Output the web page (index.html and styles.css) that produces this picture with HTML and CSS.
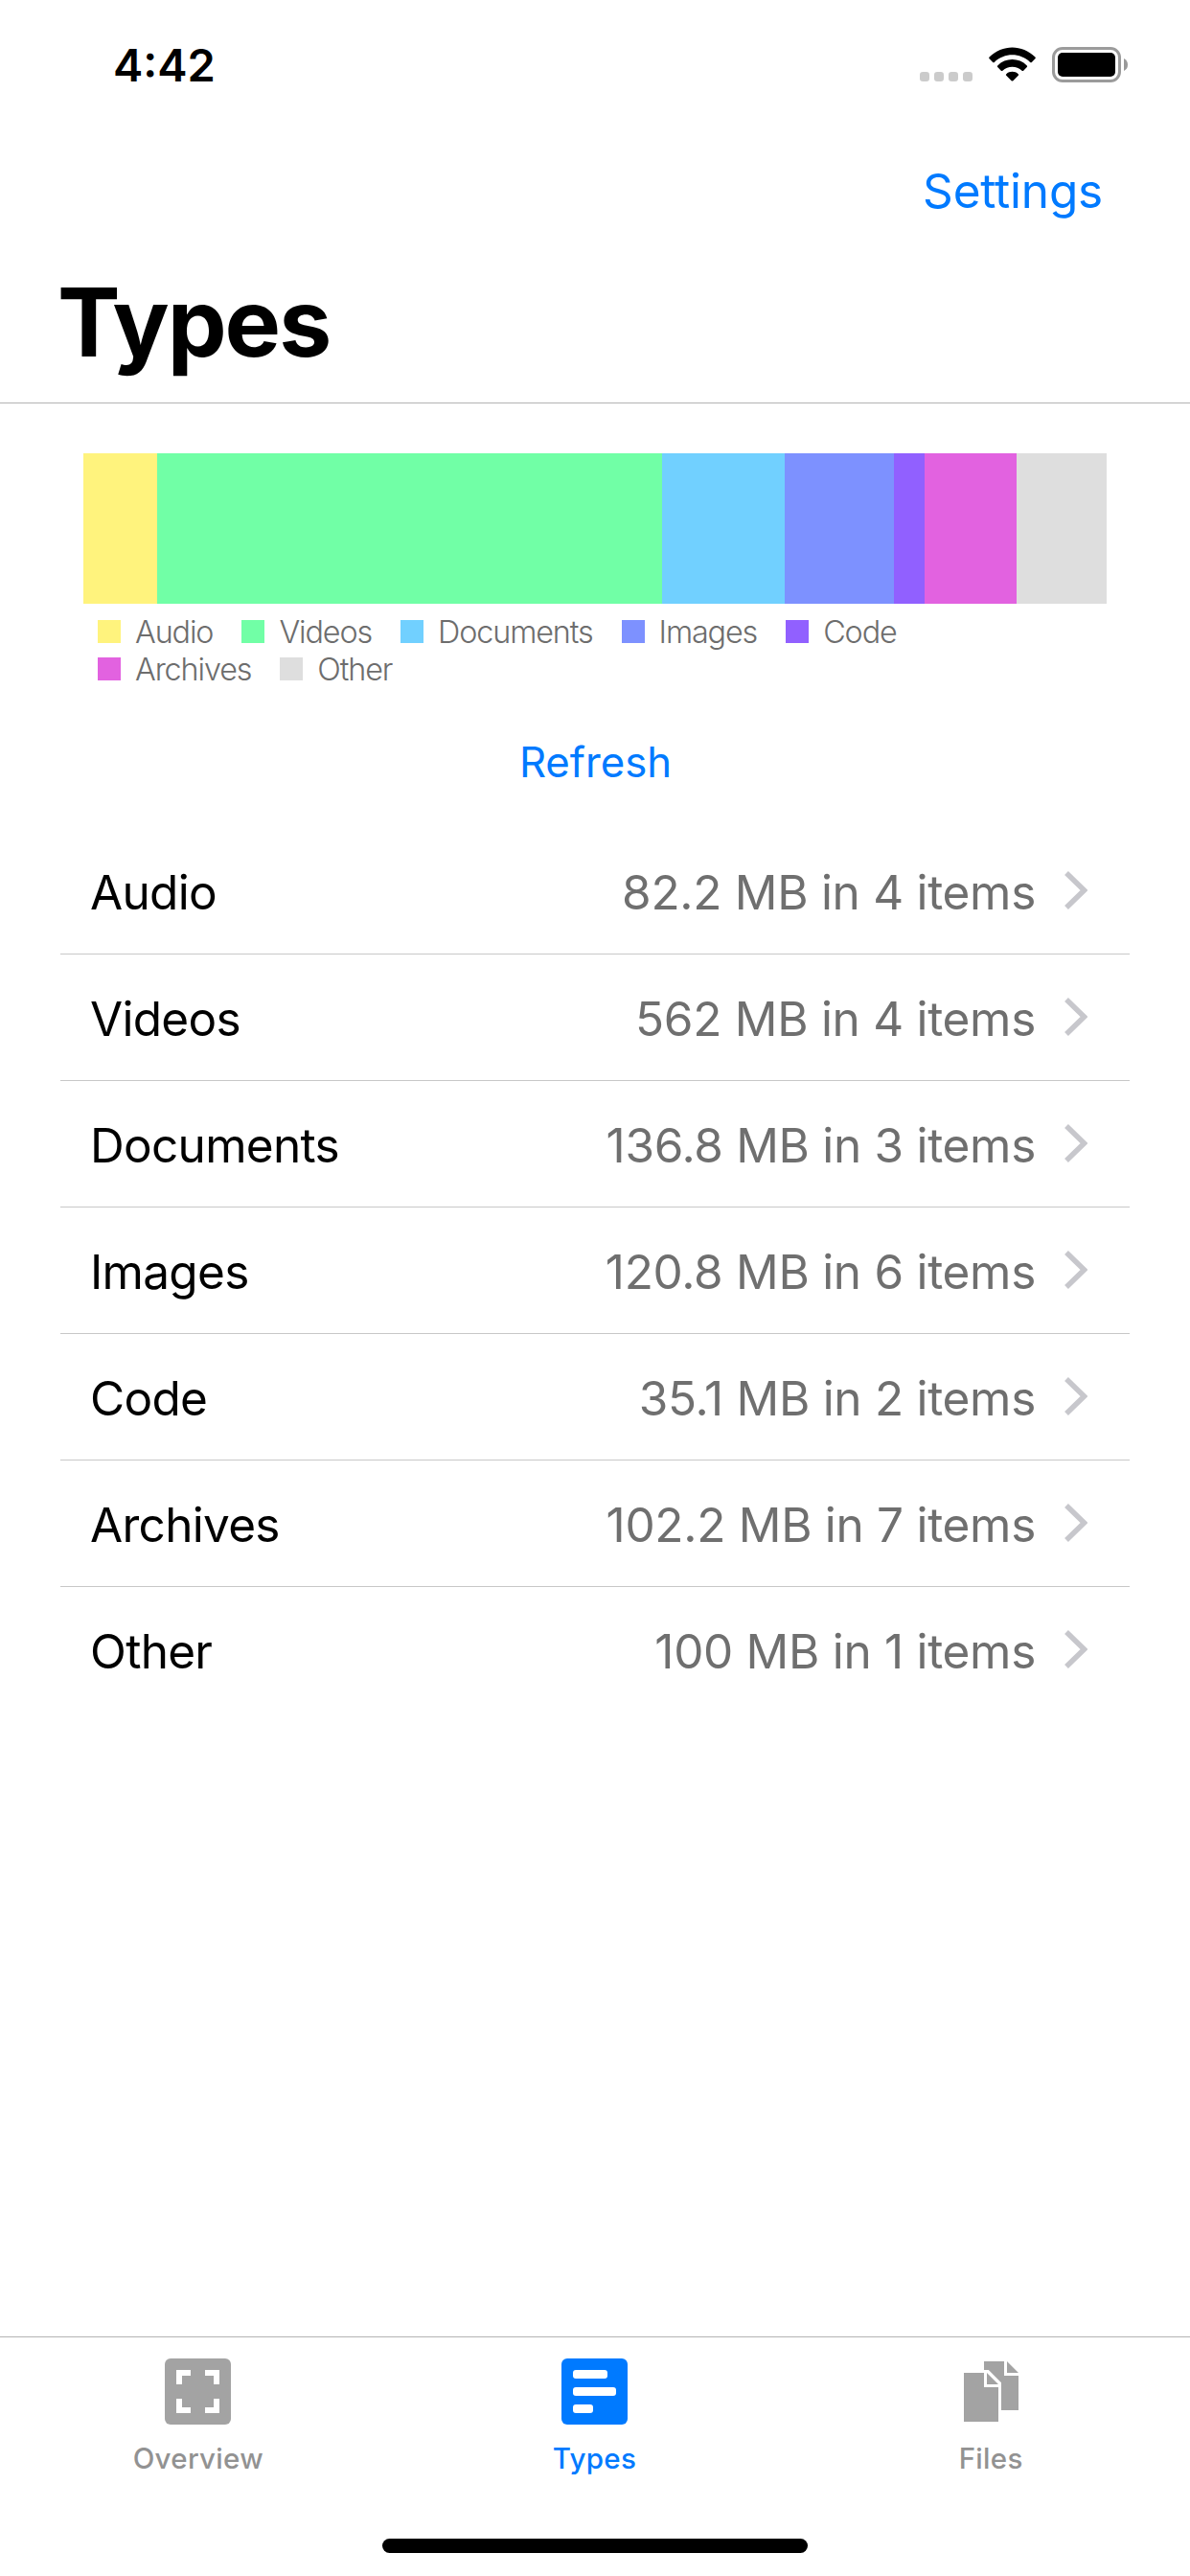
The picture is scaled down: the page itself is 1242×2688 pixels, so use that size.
FILE: index.html
```html
<!DOCTYPE html>
<html lang="en">
<head>
<meta charset="utf-8">
<title>Types</title>
<link rel="stylesheet" href="styles.css">
</head>
<body>
<div class="screen">
  <div class="status-bar">
    <span class="time">4:42</span>
    <div class="indicators">
      <svg class="signal" width="55" height="10" viewBox="0 0 55 10" fill="#cbcbcb">
        <rect width="10" height="10" rx="3.2"/><rect x="15" width="10" height="10" rx="3.2"/><rect x="30" width="10" height="10" rx="3.2"/><rect x="45" width="10" height="10" rx="3.2"/>
      </svg>
      <svg class="wifi" width="49" height="36" viewBox="0 0 49 36">
        <path d="M.6 12.3Q-.2 11.4.6 10.6C14-3 35-3 48.4 10.6q.8.8 0 1.7L44.8 15.9q-.8.7-1.6 0C32.500 5.800 16.500 5.800 5.800 15.900q-.8.700-1.600 0z"/>
        <path d="M9.200 21.100q-.8-.900 0-1.700C17.500 11 31.500 11 39.800 19.400q.8.800 0 1.700L36.200 24.700q-.8.700-1.600 0C29 19.400 20 19.400 14.400 24.700q-.8.700-1.600 0z"/>
        <path d="M18.200 29.800q-.8-.9.100-1.600C21.700 25 27.300 25 30.700 28.200q.9.700.1 1.600L25.400 35.200q-.9.800-1.800 0z"/>
      </svg>
      <svg class="battery" width="79" height="37" viewBox="0 0 79 37">
        <rect x="1.500" y="1.500" width="69" height="34" rx="9.500" fill="none" stroke="#9b9b9b" stroke-width="3"/>
        <rect x="6" y="6" width="60" height="25" rx="5"/>
        <path d="M75 12q4 2 4 6.500T75 25z" fill="#999"/>
      </svg>
    </div>
  </div>

  <header>
    <nav><a class="link settings">Settings</a></nav>
    <h1>Types</h1>
  </header>

  <main>
    <div class="usage-bar">
      <div class="audio" style="flex-grow:82.2"></div>
      <div class="videos" style="flex-grow:562"></div>
      <div class="documents" style="flex-grow:136.8"></div>
      <div class="images" style="flex-grow:120.8"></div>
      <div class="code" style="flex-grow:35.1"></div>
      <div class="archives" style="flex-grow:102.2"></div>
      <div class="other" style="flex-grow:100"></div>
    </div>
    <ul class="legend">
      <li><i class="audio"></i><span>Audio</span></li>
      <li><i class="videos"></i><span>Videos</span></li>
      <li><i class="documents"></i><span>Documents</span></li>
      <li><i class="images"></i><span>Images</span></li>
      <li><i class="code"></i><span>Code</span></li>
      <li><i class="archives"></i><span>Archives</span></li>
      <li><i class="other"></i><span>Other</span></li>
    </ul>
    <a class="link refresh">Refresh</a>

    <ul class="list">
      <li><span class="name">Audio</span><span class="value">82.2 MB in 4 items</span><svg class="chevron" viewBox="0 0 24 40"><path d="M2 2 20.500 20 2 38"/></svg></li>
      <li><span class="name">Videos</span><span class="value">562 MB in 4 items</span><svg class="chevron" viewBox="0 0 24 40"><path d="M2 2 20.500 20 2 38"/></svg></li>
      <li><span class="name">Documents</span><span class="value">136.8 MB in 3 items</span><svg class="chevron" viewBox="0 0 24 40"><path d="M2 2 20.500 20 2 38"/></svg></li>
      <li><span class="name">Images</span><span class="value">120.8 MB in 6 items</span><svg class="chevron" viewBox="0 0 24 40"><path d="M2 2 20.500 20 2 38"/></svg></li>
      <li><span class="name">Code</span><span class="value">35.1 MB in 2 items</span><svg class="chevron" viewBox="0 0 24 40"><path d="M2 2 20.500 20 2 38"/></svg></li>
      <li><span class="name">Archives</span><span class="value">102.2 MB in 7 items</span><svg class="chevron" viewBox="0 0 24 40"><path d="M2 2 20.500 20 2 38"/></svg></li>
      <li><span class="name">Other</span><span class="value">100 MB in 1 items</span><svg class="chevron" viewBox="0 0 24 40"><path d="M2 2 20.500 20 2 38"/></svg></li>
    </ul>
  </main>

  <footer>
    <div class="tabs">
      <a class="tab">
        <svg width="69" height="69" viewBox="0 0 23 23"><rect width="23" height="23" rx="2" fill="#a3a3a3"/><path fill="#fff" d="M4 4h5v2H6v3H4zM14 4h5v5h-2V6h-3zM4 14h2v3h3v2H4zM17 14h2v5h-5v-2h3z"/></svg>
        <span>Overview</span>
      </a>
      <a class="tab active">
        <svg width="69" height="69" viewBox="0 0 23 23"><rect width="23" height="23" rx="2" fill="#007aff"/><g fill="#fff"><rect x="4" y="4" width="12" height="3" rx="1"/><rect x="4" y="10" width="15" height="3" rx="1"/><rect x="4" y="16" width="7" height="3" rx="1"/></g></svg>
        <span>Types</span>
      </a>
      <a class="tab">
        <svg width="57" height="69" viewBox="0 0 19 23"><g transform="translate(0 1)" fill="#a3a3a3"><path d="M0 4h7v5h5v12H0zM8 4l4 4H8zM7 0h7v5h5v12h-6V7.400L8.600 3H7zM15 0l4 4h-4z"/></g></svg>
        <span>Files</span>
      </a>
    </div>
    <div class="home-indicator"></div>
  </footer>
</div>
</body>
</html>
```
FILE: styles.css
```css
* { box-sizing: border-box; margin: 0; padding: 0; }
body { background: #fff; color: #000; font-family: Inter, "Liberation Sans", sans-serif; }
ul { list-style: none; }
svg { display: block; flex: none; }

.screen { width: 1242px; height: 2688px; display: flex; flex-direction: column; }
.link { color: #007aff; }

.status-bar { height: 132px; padding: 49px 65px 0 118px; display: flex; justify-content: space-between; align-items: flex-start; }
.time { font-size: 47px; font-weight: 600; line-height: 38px; }
.indicators { display: flex; align-items: flex-start; }
.signal { margin: 26px 17px 0 0; }
.wifi { margin-right: 17px; }

header { height: 289px; border-bottom: 1px solid #b3b3b3; }
nav { height: 132px; padding: 3px 91px 0 0; text-align: right; }
.settings { font-size: 49.5px; line-height: 128px; letter-spacing: -.2px; }
h1 { padding: 13px 0 0 60px; font-size: 98.3px; font-weight: 700; line-height: 120px; letter-spacing: -2px; }

main { flex: 1; padding-top: 52px; }
.usage-bar { display: flex; height: 157px; margin: 0 87px; }
.usage-bar div { flex-basis: 0; }
.audio { background: #fff37d; }
.videos { background: #71ffa6; }
.documents { background: #71d0ff; }
.images { background: #7d91ff; }
.code { background: #9160ff; }
.archives { background: #e262e0; }
.other { background: #dedede; }

.legend { display: flex; flex-wrap: wrap; width: 960px; margin: 9px 0 0 102px; column-gap: 30px; }
.legend li { display: flex; align-items: center; gap: 15px; height: 39px; }
.legend i { width: 24px; height: 24px; }
.legend span { padding-top: 3px; font-size: 32.300px; font-weight: 300; line-height: 36px; letter-spacing: -1.100px; color: #6d6d6d; }

.refresh { display: block; height: 147px; padding: 19px 0 0 1px; text-align: center; font-size: 43.700px; line-height: 120px; }

.list { margin: 0 63px; }
.list li { display: flex; align-items: center; height: 132px; padding: 0 44px 0 31px; border-bottom: 1px solid #c8c8c8; font-size: 49.500px; line-height: 60px; }
.list li:last-child { border-bottom-color: transparent; }
.name { flex: 1; padding-top: 3px; letter-spacing: -.7px; }
.value { padding-top: 3px; letter-spacing: -.3px; color: #6f6f6f; }
.chevron { width: 24px; height: 40px; margin: -2px 0 0 30px; }
.chevron path { fill: none; stroke: #c7c7cc; stroke-width: 5.500; }

footer { height: 250px; border-top: 1px solid #b3b3b3; }
.tabs { display: grid; grid-template-columns: repeat(3, 1fr); height: 210px; padding: 22px 1px 0 0; }
.tab { display: flex; flex-direction: column; align-items: center; color: #929292; font-size: 29.500px; font-weight: 500; line-height: 40px; letter-spacing: .3px; }
.tab span { margin-top: 15px; }
.tab.active { color: #007aff; }
.home-indicator { width: 444px; height: 15px; margin: 0 auto; border-radius: 8px; background: #000; }
```
